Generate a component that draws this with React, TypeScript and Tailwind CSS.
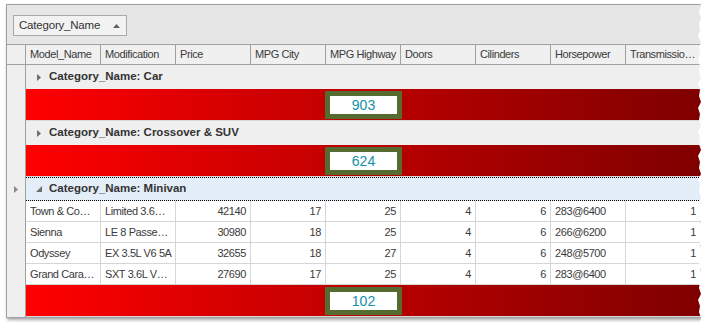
import React from "react";

const cols = [
  "Model_Name",
  "Modification",
  "Price",
  "MPG City",
  "MPG Highway",
  "Doors",
  "Cilinders",
  "Horsepower",
  "Transmissio…",
];

const leftAligned = [true, true, false, false, false, false, false, true, false];

const rows = [
  ["Town & Co…", "Limited 3.6…", "42140", "17", "25", "4", "6", "283@6400", "1"],
  ["Sienna", "LE 8 Passe…", "30980", "18", "25", "4", "6", "266@6200", "1"],
  ["Odyssey", "EX 3.5L V6 5A", "32655", "18", "27", "4", "6", "248@5700", "1"],
  ["Grand Cara…", "SXT 3.6L V…", "27690", "17", "25", "4", "6", "283@6400", "1"],
];

function CollapsedArrow() {
  return (
    <svg width="4" height="7" viewBox="0 0 4 7" className="shrink-0">
      <polygon points="0,0 4,3.5 0,7" fill="#6e6e6e" />
    </svg>
  );
}

function ExpandedArrow() {
  return (
    <svg width="6" height="6" viewBox="0 0 6 6" className="shrink-0">
      <polygon points="6,0 6,6 0,6" fill="#6e6e6e" />
    </svg>
  );
}

function Indicator({ focused }: { focused?: boolean }) {
  return (
    <div className="w-[19px] shrink-0 self-stretch bg-[#efefef] border-r border-[#a0a0a0] flex items-center justify-center">
      {focused ? (
        <svg width="4" height="7" viewBox="0 0 4 7">
          <polygon points="0,0 4,3.5 0,7" fill="#8a8a8a" />
        </svg>
      ) : null}
    </div>
  );
}

function GroupRow({ label, expanded }: { label: string; expanded?: boolean }) {
  return (
    <div className="flex h-[24px]">
      <Indicator focused={expanded} />
      {expanded ? (
        <div className="flex-1 flex items-center gap-[7px] pl-[10px] bg-[#e3eef8] border-y border-dotted border-black">
          <ExpandedArrow />
          <span className="font-bold text-[11.5px] tracking-[0px] text-[#333333]">{label}</span>
        </div>
      ) : (
        <div className="flex-1 flex items-center gap-[8px] pl-[11px] bg-[#efefef]">
          <CollapsedArrow />
          <span className="font-bold text-[11.5px] tracking-[0px] text-[#333333]">{label}</span>
        </div>
      )}
    </div>
  );
}

function Band({ value }: { value: string }) {
  return (
    <div className="flex h-[32px]">
      <Indicator />
      <div className="flex-1 flex items-center pl-[299px] bg-gradient-to-r from-[#ff0000] to-[#7f0000] border-b border-[#d8d8d8]">
        <div className="w-[77px] h-[28px] border-[5px] border-[#556b2f] bg-white flex items-center justify-center text-[14px] tracking-[0px] text-[#1190a8] leading-none">
          {value}
        </div>
      </div>
    </div>
  );
}

function DataRow({ cells }: { cells: string[] }) {
  return (
    <div className="flex h-[21px]">
      <Indicator />
      <div className="flex-1 flex border-b border-[#d6d6d6] bg-white">
        {cells.map((c, i) => (
          <div
            key={i}
            className={
              "w-[75px] shrink-0 border-r border-[#d6d6d6] px-[4px] flex items-center whitespace-nowrap overflow-hidden text-[#3a3a3a] " +
              (leftAligned[i] ? "justify-start" : "justify-end")
            }
          >
            {c}
          </div>
        ))}
      </div>
    </div>
  );
}

export default function App() {
  const jag =
    "13,0 2,0 3,6 1,12 3,18 1,24 2,30 0,36 3,42 1,48 2,54 0,60 2,66 1,72 3,78 0,84 2,90 1,96 3,102 0,108 2,114 1,120 3,126 0,132 2,138 1,144 3,150 0,156 2,162 1,168 3,174 0,180 2,186 1,192 3,198 0,204 2,210 1,216 3,222 0,228 2,234 1,240 3,246 0,252 2,258 1,264 3,270 0,276 2,282 1,288 3,294 0,300 2,306 1,312 3,318 1,326 13,326";
  return (
    <div className="w-[711px] h-[326px] bg-white relative overflow-hidden font-['Liberation_Sans',Arial,sans-serif] text-[11px] tracking-[-0.4px] text-[#333333]">
      <div className="ml-[6px] mt-[4px] w-[697px] border-l border-t border-b border-[#a0a0a0] shadow-[1px_2px_3px_rgba(0,0,0,0.35)] bg-white flex flex-col">
        <div className="h-[40px] bg-[#e6e6e6] border-b border-[#a0a0a0] flex items-start pl-[6px] pt-[10px]">
          <div className="h-[21px] w-[114px] border border-[#a9a9a9] bg-[#f2f2f2] flex items-center justify-between pl-[5px] pr-[6px] text-[#333333]">
            <span className="text-[11.5px] tracking-[-0.2px]">Category_Name</span>
            <svg width="7" height="4" viewBox="0 0 7 4">
              <polygon points="0,4 3.5,0 7,4" fill="#606060" />
            </svg>
          </div>
        </div>
        <div className="flex h-[20px] bg-[#f0f0f0] border-b border-[#a0a0a0]">
          <div className="w-[19px] shrink-0 border-r border-[#a0a0a0]" />
          {cols.map((c) => (
            <div
              key={c}
              className="w-[75px] shrink-0 border-r border-[#a0a0a0] px-[4px] flex items-center whitespace-nowrap overflow-hidden text-[#3a3a3a]"
            >
              {c}
            </div>
          ))}
        </div>
        <GroupRow label="Category_Name: Car" />
        <Band value="903" />
        <GroupRow label="Category_Name: Crossover & SUV" />
        <Band value="624" />
        <GroupRow label="Category_Name: Minivan" expanded />
        {rows.map((r, i) => (
          <DataRow key={i} cells={r} />
        ))}
        <Band value="102" />
      </div>
      <svg
        className="absolute top-0 right-0"
        width="13"
        height="326"
        viewBox="0 0 13 326"
      >
        <polygon points={jag} fill="#ffffff" />
      </svg>
    </div>
  );
}
